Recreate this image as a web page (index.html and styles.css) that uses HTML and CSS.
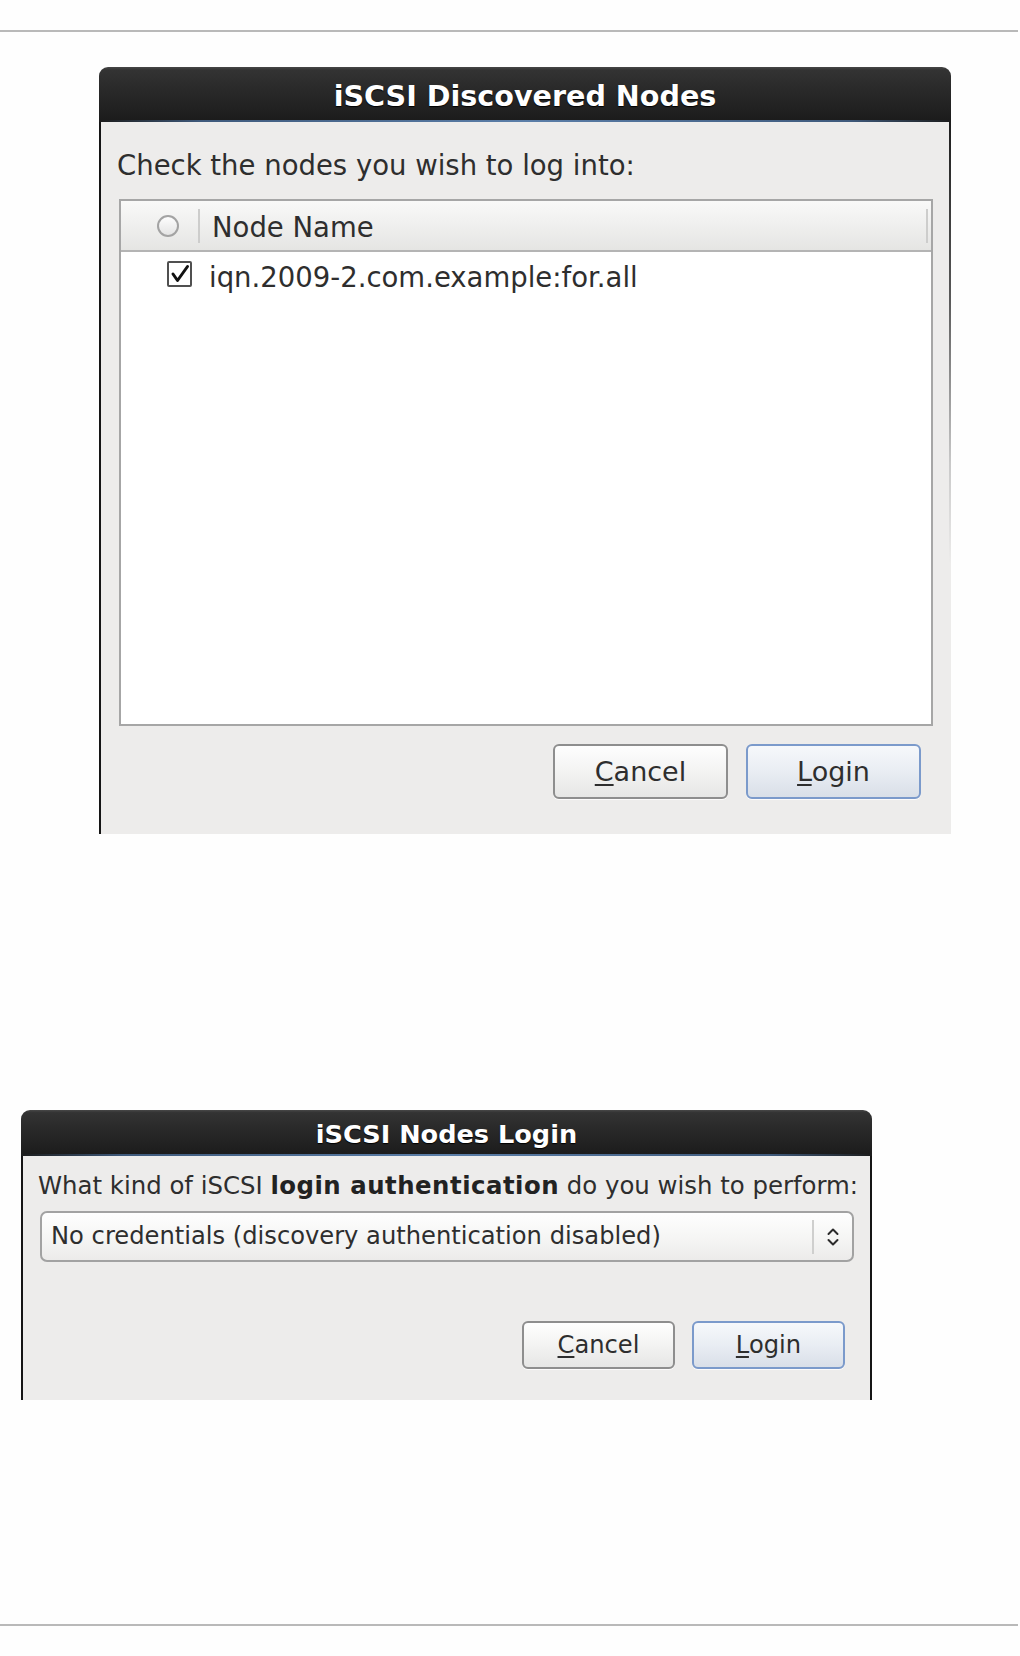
FILE: index.html
```html
<!DOCTYPE html>
<html lang="en">
<head>
<meta charset="utf-8">
<title>iSCSI</title>
<link rel="stylesheet" href="styles.css">
</head>
<body>
<div class="page">
  <div class="rule rule-top"></div>

  <section class="dialog dialog-nodes">
    <header class="titlebar"><span class="title">iSCSI Discovered Nodes</span></header>
    <div class="glow"></div>
    <div class="body">
      <p class="label">Check the nodes you wish to log into:</p>
      <div class="tree">
        <div class="tree-head">
          <span class="head-toggle"><span class="circle"></span></span>
          <span class="sep"></span>
          <span class="head-name">Node Name</span>
          <span class="sep sep-end"></span>
        </div>
        <div class="tree-row">
          <span class="check">
            <svg width="25" height="26" viewBox="0 0 25 26"><path d="M6 13 L10.5 19.5 L20.5 5.5" fill="none" stroke="#111" stroke-width="3" stroke-linecap="round" stroke-linejoin="round"/></svg>
          </span>
          <span class="node">iqn.2009-2.com.example:for.all</span>
        </div>
      </div>
      <div class="buttons">
        <button class="btn"><u>C</u>ancel</button>
        <button class="btn btn-default"><u>L</u>ogin</button>
      </div>
    </div>
  </section>

  <section class="dialog dialog-login">
    <header class="titlebar"><span class="title">iSCSI Nodes Login</span></header>
    <div class="glow"></div>
    <div class="body">
      <p class="label">What kind of iSCSI <b>login authentication</b> do you wish to perform:</p>
      <div class="combo">
        <span class="combo-text">No credentials (discovery authentication disabled)</span>
        <span class="combo-sep"></span>
        <span class="combo-arrows">
          <svg width="14" height="22" viewBox="0 0 14 22"><path d="M2.5 8 L7 3.5 L11.5 8 M2.5 14 L7 18.5 L11.5 14" fill="none" stroke="#2b2b2b" stroke-width="2" stroke-linecap="round" stroke-linejoin="round"/></svg>
        </span>
      </div>
      <div class="buttons">
        <button class="btn"><u>C</u>ancel</button>
        <button class="btn btn-default"><u>L</u>ogin</button>
      </div>
    </div>
  </section>

  <div class="rule rule-bottom"></div>
</div>
</body>
</html>
```

FILE: styles.css
```css
html, body {
  margin: 0;
  padding: 0;
  background: #fefefe;
}

.page {
  display: flex;
  flex-direction: column;
  align-items: flex-start;
  width: 1020px;
  height: 1656px;
  font-family: "DejaVu Sans", "Liberation Sans", sans-serif;
  color: #2e2e2e;
}

.rule {
  width: 1018px;
  height: 2px;
  background: #b9b9b9;
}
.rule-top { margin-top: 30px; }
.rule-bottom { margin-top: 224px; }

/* ---------- dialog shell ---------- */
.dialog {
  display: flex;
  flex-direction: column;
}

.titlebar {
  display: flex;
  align-items: center;
  justify-content: center;
  box-sizing: border-box;
  padding-top: 4px;
  background: linear-gradient(#474747 0, #333 6%, #2a2a2a 40%, #1c1c1c 100%);
  border-radius: 9px 9px 0 0;
  color: #fff;
  font-weight: bold;
  text-shadow: 0 1px 1px #000;
}

.glow {
  height: 2px;
  background: linear-gradient(to right, #1c1c1c 0, #3f5a7c 12%, #5b7ea8 50%, #3f5a7c 88%, #1c1c1c 100%);
}

.body {
  display: flex;
  flex-direction: column;
  align-items: flex-start;
  box-sizing: border-box;
}

.label {
  margin: 0;
  white-space: nowrap;
}
.label b {
  color: #222;
  letter-spacing: 0.5px;
}

.buttons {
  display: flex;
  align-self: flex-end;
}

.btn {
  box-sizing: border-box;
  font-family: inherit;
  color: #2e2e2e;
  border: 2px solid #8e8e8e;
  border-radius: 6px;
  background: linear-gradient(#fefefe, #f3f3f2 50%, #e6e6e5);
  padding: 0;
  box-shadow: 0 1px 0 rgba(255,255,255,0.8);
}
.btn u {
  text-decoration-thickness: 2px;
  text-underline-offset: 3px;
}
.btn-default {
  border-color: #7b9acb;
  background: linear-gradient(#f6f8fb, #e9edf3 50%, #d9dfe8);
}

/* ---------- dialog 1 ---------- */
.dialog-nodes {
  width: 852px;
  margin: 35px 0 0 99px;
}
.dialog-nodes .titlebar {
  height: 53px;
  font-size: 28.6px;
}
.dialog-nodes .body {
  height: 712px;
  border-left: 2px solid #151515;
  padding: 27px 18px 35px 16px;
  font-size: 27.5px;
  background:
    linear-gradient(#1e1e1e 0, #5a5a5a 25%, #c9c9c9 48%, #edeceb 62%) right top / 2px 100% no-repeat,
    #edeceb;
}
.dialog-nodes .label {
  line-height: 32px;
}

.tree {
  box-sizing: border-box;
  margin: 18px 0 0 2px;
  width: 814px;
  height: 527px;
  border: 2px solid #a6a6a6;
  background: #fff;
}

.tree-head {
  display: flex;
  align-items: center;
  height: 49px;
  border-bottom: 2px solid #b4b4b4;
  background: linear-gradient(#f9f9f8, #efefee 50%, #e5e5e3);
}
.head-toggle {
  display: flex;
  width: 77px;
  padding-left: 36px;
  box-sizing: border-box;
}
.circle {
  width: 22px;
  height: 22px;
  box-sizing: border-box;
  border: 2px solid #a3a3a3;
  border-radius: 50%;
  background: linear-gradient(#fdfdfd, #e4e4e4);
}
.sep {
  width: 2px;
  height: 34px;
  background: #cdcdcc;
}
.head-name {
  flex: 1;
  padding-left: 12px;
  line-height: 32px;
  position: relative;
  top: 1px;
}
.sep-end {
  margin-right: 3px;
}

.tree-row {
  display: flex;
  align-items: center;
  height: 44px;
}
.check {
  display: flex;
  box-sizing: border-box;
  width: 25px;
  height: 26px;
  margin-left: 46px;
  border: 2px solid #505050;
  border-radius: 2px;
  background: #fff;
}
.check svg {
  margin: -2px;
}
.node {
  margin-left: 17px;
  line-height: 32px;
  position: relative;
  top: 3px;
}

.dialog-nodes .buttons {
  margin-top: 18px;
  margin-right: 12px;
  gap: 18px;
}
.dialog-nodes .btn {
  width: 175px;
  height: 55px;
  font-size: 27px;
}

/* ---------- dialog 2 ---------- */
.dialog-login {
  width: 851px;
  margin: 276px 0 0 21px;
}
.dialog-login .titlebar {
  height: 44px;
  font-size: 25.6px;
}
.dialog-login .body {
  height: 244px;
  border-left: 2px solid #151515;
  border-right: 2px solid #151515;
  padding: 16px 16px 31px 15px;
  font-size: 24.4px;
  background: #edeceb;
}
.dialog-login .label {
  line-height: 28px;
}

.combo {
  display: flex;
  align-items: center;
  box-sizing: border-box;
  margin: 11px 0 0 2px;
  width: 814px;
  height: 51px;
  border: 2px solid #a2a2a2;
  border-radius: 7px;
  background: linear-gradient(#fefefe, #f6f6f5 50%, #ecebea);
  padding-left: 9px;
}
.combo-text {
  flex: 1;
  white-space: nowrap;
  font-size: 24.2px;
  position: relative;
  top: -1px;
}
.combo-sep {
  width: 2px;
  height: 34px;
  background: #cfcfce;
}
.combo-arrows {
  display: flex;
  width: 38px;
  justify-content: center;
}

.dialog-login .buttons {
  margin-top: 59px;
  margin-right: 9px;
  gap: 17px;
}
.dialog-login .btn {
  width: 153px;
  height: 48px;
  font-size: 24.2px;
}
```
